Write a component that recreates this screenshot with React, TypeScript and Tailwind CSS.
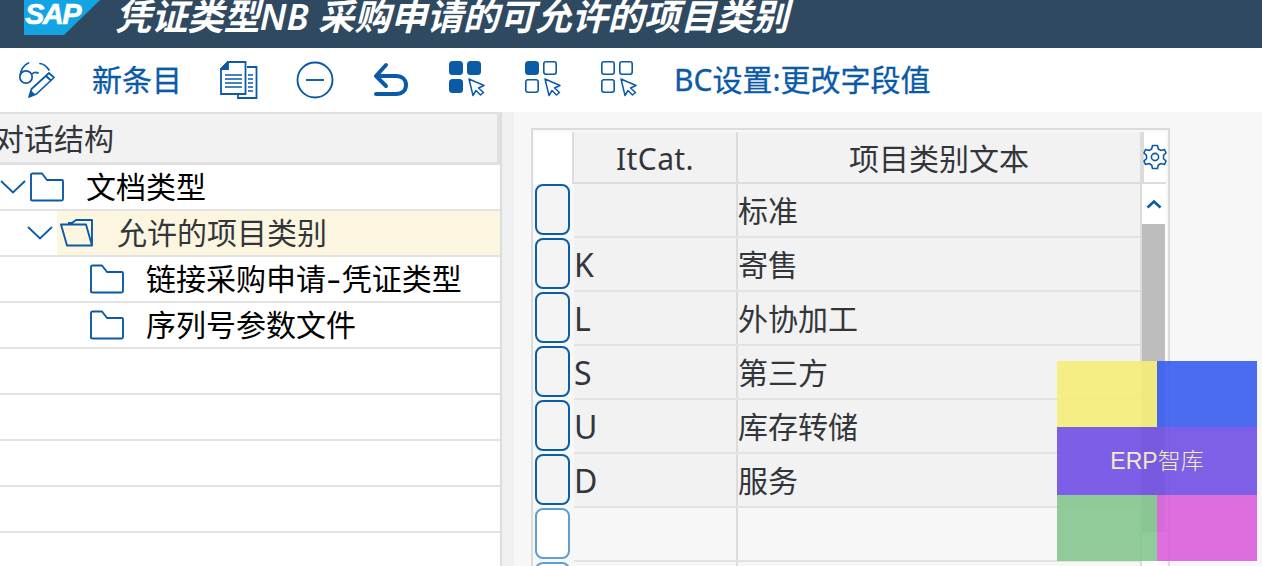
import React from "react";

const B = "#0a5aa8";
const FONT = "font-['Noto_Sans','Noto_Sans_CJK_SC',sans-serif]";

function Cursor({ x, y }: { x: number; y: number }) {
  return (
    <path
      transform={`translate(${x} ${y})`}
      d="M1 1 L16 7.5 L10.5 10 L15.5 14.5 L12.5 17 L8 12.5 L5 17.5 Z"
      fill="white"
      stroke={B}
      strokeWidth="1.5"
      strokeLinejoin="round"
    />
  );
}

function Grid({ filled }: { filled: boolean[] }) {
  const pos = [
    [1, 0],
    [19, 0],
    [1, 18],
  ];
  return (
    <svg width="40" height="38" viewBox="0 0 40 38" className="shrink-0">
      {pos.map(([x, y], i) => (
        <rect
          key={i}
          x={filled[i] ? x : x + 0.8}
          y={filled[i] ? y : y + 0.8}
          width={filled[i] ? 14 : 12.4}
          height={filled[i] ? 14 : 12.4}
          rx={filled[i] ? 3.5 : 2.2}
          fill={filled[i] ? B : "white"}
          stroke={filled[i] ? "none" : B}
          strokeWidth="1.6"
        />
      ))}
      <Cursor x={20} y={17} />
    </svg>
  );
}

function GlassesIcon() {
  return (
    <svg width="38" height="38" viewBox="0 0 38 38" className="shrink-0">
      <g fill="none" stroke={B} strokeWidth="1.7" strokeLinecap="round">
        <circle cx="8" cy="16" r="6.2" />
        <path d="M2.3 14 C3 8 6 4 10.5 2 M14 13 C16 11 18 11 20 12 M22 2.5 C26 3 29 6 31 9" />
      </g>
      <path d="M11 36 L13.5 28 L31 12 L36 16.5 L18.5 33 Z" fill="white" stroke={B} strokeWidth="1.7" strokeLinejoin="round" />
      <path d="M11 36 L13 29.5 L17.5 33.5 Z" fill={B} />
      <path d="M28 15 L33 19.5" stroke={B} strokeWidth="2" />
    </svg>
  );
}

function DocIcon() {
  return (
    <svg width="38" height="38" viewBox="0 0 38 38" className="shrink-0">
      <g fill="none" stroke={B} strokeWidth="1.8">
        <path d="M18 33 V37 H36.5 V6 H27" />
        <path d="M8 1 H25.5 V33 H1 V8 Z" fill="white" />
        <path d="M1 8 H8 V1 Z" fill={B} />
      </g>
      <path d="M5 14 H22 M5 18 H22 M5 22 H22 M5 26 H22 M28 14 H33 M28 18 H33 M28 22 H33 M28 26 H33 M28 30 H33" stroke={B} strokeWidth="1.6" />
    </svg>
  );
}

function MinusCircle() {
  return (
    <svg width="38" height="38" viewBox="0 0 38 38" className="shrink-0">
      <circle cx="19" cy="19" r="17.5" fill="none" stroke={B} strokeWidth="1.9" />
      <path d="M10 19 H28" stroke={B} strokeWidth="1.9" />
    </svg>
  );
}

function UndoIcon() {
  return (
    <svg width="36" height="36" viewBox="0 0 36 36" className="shrink-0">
      <path d="M13 3 L3 14 L13 24" fill="none" stroke={B} strokeWidth="4" strokeLinecap="round" strokeLinejoin="round" />
      <path d="M4 14 H23 C29 14 33 17.5 33 23 C33 28.5 29 32 23 32 H3" fill="none" stroke={B} strokeWidth="4" strokeLinecap="round" />
    </svg>
  );
}

function Folder() {
  return (
    <svg width="34" height="30" viewBox="0 0 34 30" className="shrink-0">
      <path d="M1 28 V3 Q1 1.5 2.5 1.5 H12 L17 8 H32 Q33 8 33 9.5 V27 Q33 28.5 31.5 28.5 H2.5 Q1 28.5 1 27 Z" fill="white" stroke={B} strokeWidth="1.9" strokeLinejoin="round" />
    </svg>
  );
}

function OpenFolder() {
  return (
    <svg width="34" height="30" viewBox="0 0 34 30" className="shrink-0">
      <path d="M8 5 H12 L16 2 H32 V27 M1 6.5 H26 L32 27.5 H7 Z" fill="none" stroke={B} strokeWidth="1.9" strokeLinejoin="round" />
    </svg>
  );
}

function Chevron() {
  return (
    <svg width="26" height="16" viewBox="0 0 26 16" className="shrink-0">
      <path d="M1 2 L13 13.5 L25 2" fill="none" stroke={B} strokeWidth="1.8" />
    </svg>
  );
}

function TreeRow({ indent, icon, label, chevron, selected }: { indent: string; icon: React.ReactNode; label: React.ReactNode; chevron?: boolean; selected?: boolean }) {
  return (
    <div className={`h-[46px] flex items-center border-b-2 border-[#e3e3e3] ${indent}`}>
      {chevron && <span className="mr-[4px]"><Chevron /></span>}
      <div className={`flex items-center self-stretch flex-1 ${selected ? "bg-[#fcf6e0] text-[#32363a] pl-[3px]" : "text-black"}`}>
        {icon}
        <span className={`${selected ? "ml-[23px]" : "ml-[22px]"} text-[30px] leading-none whitespace-nowrap`}>{label}</span>
      </div>
    </div>
  );
}

const rows = [
  ["", "标准"],
  ["K", "寄售"],
  ["L", "外协加工"],
  ["S", "第三方"],
  ["U", "库存转储"],
  ["D", "服务"],
  ["", ""],
  ["", ""],
];

export default function App() {
  return (
    <div className={`w-[1262px] h-[566px] overflow-hidden bg-white relative ${FONT}`}>
      {/* title bar */}
      <header className="h-[48px] bg-[#2f4a60] flex items-start overflow-hidden">
        <div className="relative ml-[24px] w-[76px] h-[35px] shrink-0">
          <svg width="76" height="35" viewBox="0 0 76 35" className="block">
            <polygon points="0,0 76,0 40,35 0,35" fill="#12a4e3" />
          </svg>
          <span className="absolute left-[1px] top-[-2px] text-[29px] leading-[32px] font-bold italic text-white font-['Liberation_Sans'] tracking-[-1.5px] [-webkit-text-stroke:0.6px_white]">SAP</span>
        </div>
        <h1 className="ml-[15px] -mt-[8px] text-[36.2px] leading-[48px] text-white italic font-semibold whitespace-nowrap">凭证类型NB 采购申请的可允许的项目类别</h1>
      </header>

      {/* toolbar */}
      <div className="h-[64px] flex items-center pl-[18px] text-[#0a5aa8]">
        <GlassesIcon />
        <span className="ml-[36px] text-[30px] leading-none [-webkit-text-stroke:0.3px_#0a5aa8]">新条目</span>
        <span className="ml-[38px]"><DocIcon /></span>
        <span className="ml-[38px]"><MinusCircle /></span>
        <span className="ml-[39px]"><UndoIcon /></span>
        <span className="ml-[39px]"><Grid filled={[true, true, true]} /></span>
        <span className="ml-[36px]"><Grid filled={[true, false, false]} /></span>
        <span className="ml-[36px]"><Grid filled={[false, false, false]} /></span>
        <span className="ml-[34px] text-[30px] leading-none whitespace-nowrap [-webkit-text-stroke:0.3px_#0a5aa8]">BC设置:更改字段值</span>
      </div>

      {/* body */}
      <div className="flex h-[454px]">
        <aside className="w-[500px] shrink-0 flex flex-col">
          <div className="h-[53px] shrink-0 bg-[#f2f2f2] border-t-2 border-b-[3px] border-r-[3px] border-[#e0e0e0] flex items-center text-[30px] text-[#32363a] whitespace-nowrap overflow-hidden">
            <span className="-ml-[6px]">对话结构</span>
          </div>
          <TreeRow indent="pl-0" chevron icon={<Folder />} label="文档类型" />
          <TreeRow indent="pl-[27px]" chevron selected icon={<OpenFolder />} label="允许的项目类别" />
          <TreeRow
            indent="pl-[90px]"
            icon={<Folder />}
            label={
              <>
                链接采购申请<span className="inline-block px-[3px] scale-x-150">-</span>凭证类型
              </>
            }
          />
          <TreeRow indent="pl-[90px]" icon={<Folder />} label="序列号参数文件" />
          <div className="h-[46px] shrink-0 border-b-2 border-[#e3e3e3]" />
          <div className="h-[46px] shrink-0 border-b-2 border-[#e3e3e3]" />
          <div className="h-[46px] shrink-0 border-b-2 border-[#e3e3e3]" />
          <div className="h-[46px] shrink-0 border-b-2 border-[#e3e3e3]" />
        </aside>

        <div className="w-[14px] shrink-0 bg-[#eef0f1] border-l-[2px] border-[#dcdcdc]" />

        <main className="flex-1 bg-[#f7f7f7] pl-[17px] pt-[16px] overflow-hidden">
          <div className="w-[639px] border-2 border-[#dcdcdc] pl-[1px] pt-[2px] pr-[2px]">
            {/* header row */}
            <div className="flex h-[52px]">
              <div className="w-[40px] bg-white border-r-2 border-[#dcdcdc]" />
              <div className="flex flex-1 bg-[#f2f2f2] border-b-2 border-[#dcdcdc] text-[30px] text-[#32363a]">
                <div className="w-[164px] border-r-2 border-[#dcdcdc] flex items-center justify-center pt-[2px] tracking-[0.4px]">ItCat.</div>
                <div className="flex-1 flex items-center justify-center pt-[2px]">项目类别文本</div>
              </div>
              <div className="w-[4px] bg-[#dcdcdc]" />
              <div className="w-[22px] bg-white border-b-2 border-[#dcdcdc] flex items-center justify-center shrink-0">
                <svg width="24" height="26" viewBox="0 0 24 26" className="shrink-0">
                  <path d="M9.5 1.5 H14.5 L15.3 5 L18 6.5 L21.5 5.5 L23 9 L20.5 11.3 V14.7 L23 17 L21.5 20.5 L18 19.5 L15.3 21 L14.5 24.5 H9.5 L8.7 21 L6 19.5 L2.5 20.5 L1 17 L3.5 14.7 V11.3 L1 9 L2.5 5.5 L6 6.5 L8.7 5 Z" fill="none" stroke={B} strokeWidth="1.6" strokeLinejoin="round" />
                  <circle cx="12" cy="13" r="3.6" fill="none" stroke={B} strokeWidth="1.6" />
                </svg>
              </div>
            </div>
            <div className="flex">
              {/* table rows */}
              <div className="flex-1 min-w-0">
                {rows.map(([k, t], i) => {
                  const hasData = i < 6;
                  return (
                    <div key={i} className="flex h-[54px]">
                      <div className="w-[40px] shrink-0 flex items-start pl-[1px]">
                        <div className={`w-[35px] h-[51px] rounded-[8px] border-2 ${hasData ? "border-[#0a5ea8] bg-[#f4f4f4]" : "border-[#5f9dd3] bg-white"}`} />
                      </div>
                      <div className={`flex flex-1 border-b-2 border-[#e3e3e3] text-[30px] text-[#32363a] ${hasData ? "bg-[#f2f2f2]" : "bg-[#f7f7f7]"}`}>
                        <div className="w-[164px] border-r-2 border-[#dcdcdc] flex items-center leading-none pt-[2px] text-[32px]">{k}</div>
                        <div className="flex-1 flex items-center pt-[2px] leading-none">{t}</div>
                      </div>
                    </div>
                  );
                })}
              </div>
              {/* scrollbar */}
              <div className="w-[26px] shrink-0 border-l-2 border-[#dcdcdc] flex flex-col bg-white">
                <div className="h-[40px] flex items-center justify-center">
                  <svg width="16" height="10" viewBox="0 0 16 10">
                    <path d="M1.5 8.5 L8 2.5 L14.5 8.5" fill="none" stroke={B} strokeWidth="2.6" />
                  </svg>
                </div>
                <div className="h-[308px] w-[23px] bg-[#bdbdbd]" />
              </div>
            </div>
          </div>
        </main>
      </div>

      {/* watermark */}
      <div className="absolute left-[1057px] top-[361px] w-[200px] h-[200px] grid grid-cols-2 grid-rows-[66px_68px_66px] opacity-90">
        <div className="bg-[#f5ee7a]" />
        <div className="bg-[#3a5ef0]" />
        <div className="col-span-2 bg-[#7150e6] flex items-center justify-center text-[#f5edc0] text-[23px] font-['Liberation_Sans','Noto_Sans_CJK_SC',sans-serif] font-light">ERP智库</div>
        <div className="bg-[#85c78f]" />
        <div className="bg-[#dc60dc]" />
      </div>
    </div>
  );
}
